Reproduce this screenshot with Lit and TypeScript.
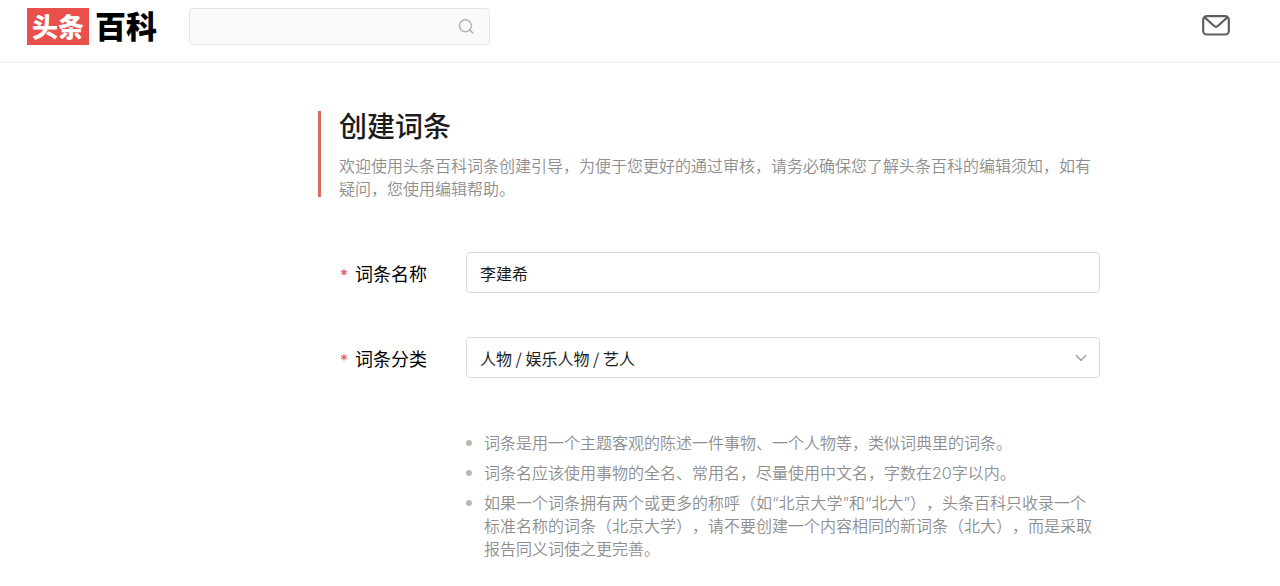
import { LitElement, html, css } from "lit";
import { customElement, state } from "lit/decorators.js";

@customElement("app-header")
class AppHeader extends LitElement {
  static styles = css`
    :host {
      display: block;
    }
    .bar {
      display: flex;
      align-items: flex-start;
      box-sizing: border-box;
      padding: 8px 50px 16px 27px;
      border-bottom: 2px solid #f4f4f4;
      background: #fff;
    }
    .logo {
      display: flex;
      gap: 6px;
      align-items: flex-start;
      height: 37px;
      font-weight: 900;
      color: #000;
      text-decoration: none;
      white-space: nowrap;
    }
    .mark {
      box-sizing: border-box;
      height: 37px;
      padding: 0 5px;
      background: #e94f4b;
      color: #fff;
      font-size: 26px;
      line-height: 35px;
    }
    .word {
      font-size: 31px;
      line-height: 33px;
    }
    .search {
      display: flex;
      align-items: center;
      box-sizing: border-box;
      width: 301px;
      height: 37px;
      margin-left: 32px;
      padding-right: 15px;
      border: 1px solid #e6e6e6;
      border-radius: 4px;
      background: #fafafa;
    }
    .query {
      flex: 1;
      min-width: 0;
      height: 100%;
      padding: 0 12px;
      border: 0;
      outline: 0;
      background: transparent;
      font: inherit;
      box-sizing: border-box;
    }
    .icon {
      display: flex;
      padding: 0;
      border: 0;
      background: none;
      cursor: pointer;
    }
    .mail {
      margin: 7px 0 0 auto;
    }
  `;

  render() {
    return html`
      <header class="bar">
        <a class="logo" href="#"><span class="mark">头条</span><span class="word">百科</span></a>
        <form class="search" role="search" @submit=${(e: Event) => e.preventDefault()}>
          <input class="query" type="text" aria-label="搜索" />
          <button class="icon" type="submit" aria-label="搜索">
            <svg width="16" height="16" viewBox="0 0 16 16" fill="none" stroke="#b4b4b4" stroke-width="1.5">
              <circle cx="7.4" cy="6.8" r="6" />
              <path d="M11.7 11.1 14.8 13.8" stroke-linecap="round" />
            </svg>
          </button>
        </form>
        <button class="icon mail" type="button" aria-label="消息">
          <svg width="28" height="21" viewBox="0 0 28 21" fill="none" stroke="#5f5f5f" stroke-width="2.2">
            <rect x="1.2" y="1.1" width="25.6" height="18.4" rx="3.6" />
            <path d="M2.6 2.4 12.2 11Q14 12.6 15.8 11L25.4 2.4" />
          </svg>
        </button>
      </header>
    `;
  }
}

@customElement("app-root")
class AppRoot extends LitElement {
  static styles = css`
    :host {
      display: block;
      font-family: "Noto Sans CJK SC", sans-serif;
      text-spacing-trim: space-all;
      color: #1c1c1c;
      background: #fff;
    }
    .page {
      padding: 48px 180px 24px 318px;
    }
    .intro {
      display: grid;
      grid-template-columns: 3px 1fr;
      column-gap: 18px;
    }
    .intro::before {
      content: "";
      margin-bottom: 3px;
      background: #d96a62;
    }
    .title {
      margin: 0;
      padding-bottom: 15px;
      font-size: 28px;
      font-weight: 500;
      line-height: 28px;
    }
    .lead {
      margin: 0;
      font-size: 16px;
      font-weight: 350;
      line-height: 23px;
      color: #8e8e8e;
    }
    .form {
      display: grid;
      grid-template-columns: 126px 1fr;
      row-gap: 44px;
      align-items: center;
      margin-top: 52px;
      padding-left: 22px;
    }
    .label {
      display: flex;
      align-items: center;
      gap: 7px;
      font-size: 18px;
      line-height: 24px;
      color: #000;
    }
    .star {
      padding-top: 4px;
      color: #e0554f;
      font-family: "Inter", sans-serif;
      font-size: 16px;
    }
    .control {
      box-sizing: border-box;
      display: block;
      width: 100%;
      height: 41px;
      margin: 0;
      padding: 0 13px;
      border: 1px solid #dcdcdc;
      border-radius: 4px;
      outline: 0;
      background: #fff;
      color: #1c1c1c;
      font-family: inherit;
      font-size: 16px;
      appearance: none;
    }
    .picker {
      display: grid;
      align-items: center;
    }
    .picker > * {
      grid-area: 1 / 1;
    }
    .chevron {
      justify-self: end;
      margin-right: 13px;
      pointer-events: none;
    }
    .tips {
      display: grid;
      row-gap: 7px;
      margin: 0;
      margin-top: 10px;
      padding: 0;
      grid-column: 2;
      list-style: none;
      font-family: "Inter", "Noto Sans CJK SC", sans-serif;
      font-size: 16px;
      font-weight: 350;
      line-height: 23px;
      color: #8e8e8e;
    }
    .tip {
      display: grid;
      grid-template-columns: 6px 1fr;
      column-gap: 12px;
    }
    .tip::before {
      content: "";
      height: 6px;
      margin-top: 8px;
      border-radius: 3px;
      background: #b9b9ae;
    }
  `;

  @state() private name = "李建希";

  private tips = [
    "词条是用一个主题客观的陈述一件事物、一个人物等，类似词典里的词条。",
    "词条名应该使用事物的全名、常用名，尽量使用中文名，字数在20字以内。",
    "如果一个词条拥有两个或更多的称呼（如“北京大学”和“北大”），头条百科只收录一个标准名称的词条（北京大学），请不要创建一个内容相同的新词条（北大），而是采取报告同义词使之更完善。",
  ];

  render() {
    return html`
      <app-header></app-header>
      <main class="page">
        <section class="intro">
          <div>
            <h1 class="title">创建词条</h1>
            <p class="lead">欢迎使用头条百科词条创建引导，为便于您更好的通过审核，请务必确保您了解头条百科的编辑须知，如有疑问，您使用编辑帮助。</p>
          </div>
        </section>
        <form class="form">
          <label class="label" for="name"><span class="star">*</span>词条名称</label>
          <input
            class="control"
            id="name"
            type="text"
            .value=${this.name}
            @input=${(e: Event) => (this.name = (e.target as HTMLInputElement).value)}
          />
          <label class="label" for="category"><span class="star">*</span>词条分类</label>
          <div class="picker">
            <select class="control" id="category">
              <option>人物 / 娱乐人物 / 艺人</option>
            </select>
            <svg class="chevron" width="12" height="8" viewBox="0 0 12 8" fill="none" stroke="#8c8c8c" stroke-width="1.2">
              <path d="M1 1.2 6 6.4 11 1.2" />
            </svg>
          </div>
          <ul class="tips">
            ${this.tips.map((tip) => html`<li class="tip">${tip}</li>`)}
          </ul>
        </form>
      </main>
    `;
  }
}
